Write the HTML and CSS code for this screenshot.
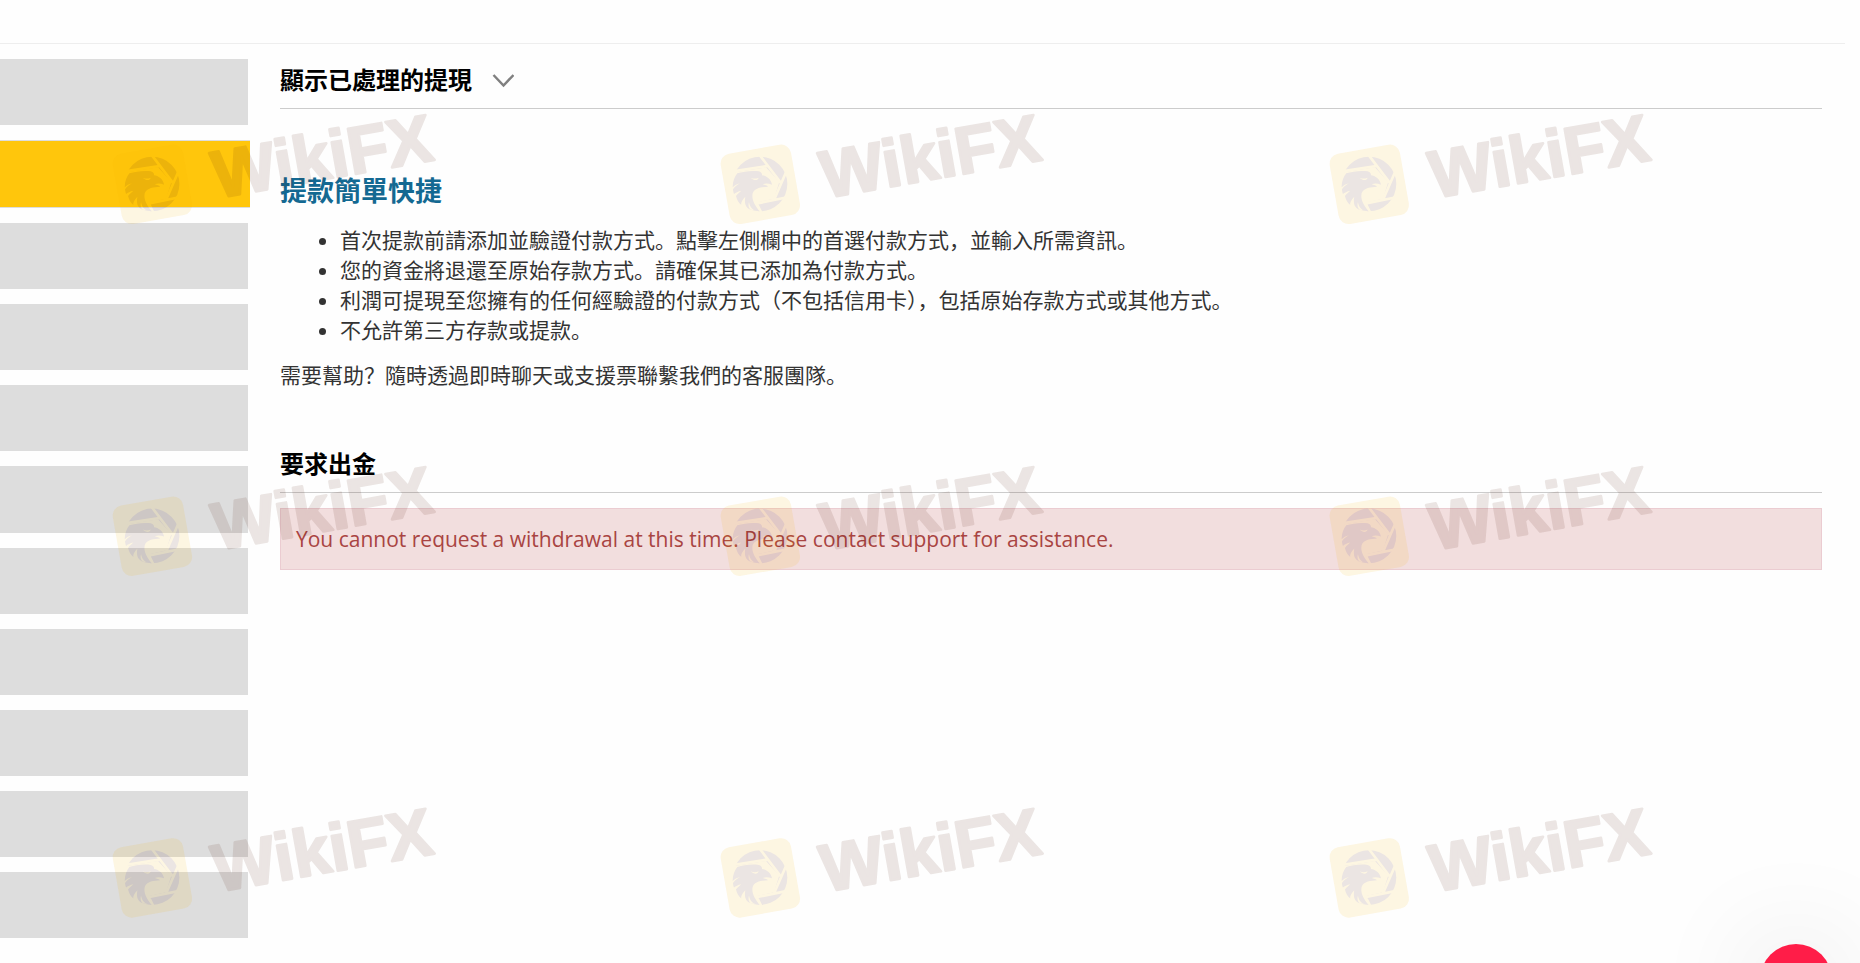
FILE: index.html
```html
<!DOCTYPE html>
<html lang="zh-Hans">
<head>
    <meta charset="UTF-8">
    <meta name="viewport" content="width=device-width, initial-scale=1.0">
    <title>提現</title>
    <link rel="stylesheet" href="styles.css">
</head>
<body>
    <header class="topbar"></header>

    <div class="layout">
        <nav class="sidebar">
            <div class="method"></div>
            <div class="method active"></div>
            <div class="method"></div>
            <div class="method"></div>
            <div class="method"></div>
            <div class="method"></div>
            <div class="method"></div>
            <div class="method"></div>
            <div class="method"></div>
            <div class="method"></div>
            <div class="method"></div>
        </nav>

        <main class="content">
            <h2 class="section-title">
                <button type="button" class="toggle">
                    顯示已處理的提現
                    <svg class="chevron" viewBox="0 0 22 16" aria-hidden="true"><path d="M1.5 3 L11.5 13.5 L21.5 3"/></svg>
                </button>
            </h2>

            <section class="info">
                <h1>提款簡單快捷</h1>
                <ul>
                    <li>首次提款前請添加並驗證付款方式。點擊左側欄中的首選付款方式，並輸入所需資訊。</li>
                    <li>您的資金將退還至原始存款方式。請確保其已添加為付款方式。</li>
                    <li>利潤可提現至您擁有的任何經驗證的付款方式（不包括信用卡），包括原始存款方式或其他方式。</li>
                    <li>不允許第三方存款或提款。</li>
                </ul>
                <p>需要幫助？隨時透過即時聊天或支援票聯繫我們的客服團隊。</p>
            </section>

            <h2 class="section-title">要求出金</h2>
            <div class="alert">You cannot request a withdrawal at this time. Please contact support for assistance.</div>
        </main>
    </div>

    <button type="button" class="chat" aria-label="即時聊天"></button>

    <!-- 浮水印 -->
    <svg class="watermark" width="1860" height="963" aria-hidden="true">
        <defs>
            <g id="mark">
                <g transform="rotate(-10 181 283)">
                    <rect class="gold" x="74" y="176" width="214" height="214" rx="30"/>
                </g>
                <circle class="dark" cx="180" cy="282" r="82"/>
                <!-- 光圈縫隙 -->
                <path class="gap" d="M94 245 L202 228 M178 194 L242 278 M262 238 L222 330 M266 321 L168 341 M168 336 L186 372"/>
                <path class="gold" d="M104 247 L198 232 L238 276 L222 326 L168 338 L180 364 L100 350 L92 262 Z"/>
                <path class="dark" d="M98 292 C98 274 104 260 112 250 C130 246 150 241 176 244 C184 246 187 252 186 256 C198 257 214 268 216 284 C206 280 196 280 188 283 C194 285 202 286 204 290 C186 291 164 293 158 310 C154 328 164 346 179 364 C158 363 150 352 147 336 C144 346 146 354 152 359 C138 354 132 342 136 320 C126 330 122 340 124 345 C116 339 111 330 108 318 C114 310 120 306 124 302 C114 304 107 308 102 312 C100 306 99 300 99 298 C106 288 114 284 120 280 C110 282 104 286 98 292 Z"/>
                <path class="gold" d="M152 263 C162 267 168 266 176 263 C174 272 162 273 152 263 Z"/>
                <text class="dark" x="375" y="325" transform="rotate(-10 375 325)">WikiFX</text>
            </g>
            <g id="row">
                <use href="#mark" x="-1824"/>
                <use href="#mark"/>
                <use href="#mark" x="1827"/>
            </g>
        </defs>
        <g transform="translate(700 90) scale(0.3333)">
            <use href="#row"/>
            <use href="#row" y="1056"/>
            <use href="#row" y="2081"/>
        </g>
    </svg>
</body>
</html>
```
FILE: styles.css
```css
* {
    box-sizing: border-box;
    margin: 0;
    padding: 0;
}
body {
    font-family: 'Open Sans', 'Noto Sans CJK SC', sans-serif;
    font-size: 21px;
    line-height: 30px;
    color: #333;
    background: #fefefe;
    overflow: hidden;
}
.topbar {
    height: 44px;
    margin-right: 15px;
    border-bottom: 1px solid #eee;
}
.layout {
    display: flex;
    gap: 30px;
    padding: 15px 38px 0 0;
}
.sidebar {
    display: flex;
    flex-direction: column;
    gap: 15px;
    width: 250px;
    height: calc(100vh - 84px);
}
.method {
    flex: 1;
    margin-right: 2px;
    background: #ddd;
}
.method.active {
    margin-right: 0;
    background: #ffc60c;
    border-top: 1px solid #ddd;
    border-bottom: 1px solid #ddd;
}
.content {
    flex: 1;
}
.section-title {
    padding: 6px 0 13px;
    font-size: 24px;
    line-height: 30px;
    font-weight: bold;
    color: #000;
    border-bottom: 1px solid #ccc;
}
.toggle {
    display: flex;
    align-items: center;
    gap: 20px;
    font: inherit;
    color: inherit;
    background: none;
    border: none;
    cursor: pointer;
}
.chevron {
    width: 22px;
    height: 16px;
    fill: none;
    stroke: #808080;
    stroke-width: 2.5;
}
.info {
    padding: 60px 0 53px;
}
.info h1 {
    margin-bottom: 12px;
    font-size: 27px;
    line-height: 44px;
    color: #146992;
}
.info ul {
    margin-bottom: 15px;
    padding-left: 60px;
}
.alert {
    margin-top: 15px;
    padding: 15px;
    color: #a94442;
    background: #f2dede;
    border: 1px solid #ebccd1;
}
.chat {
    position: fixed;
    right: 28px;
    bottom: -53px;
    width: 72px;
    height: 72px;
    background: #ff1d48;
    border: none;
    border-radius: 50%;
    box-shadow: 0 5px 110px 10px rgba(0, 0, 0, 0.1);
    cursor: pointer;
}
.watermark {
    position: fixed;
    top: 0;
    left: 0;
    opacity: 0.11;
    pointer-events: none;
}
.watermark text {
    font-family: 'Liberation Sans', Arial, sans-serif;
    font-size: 200px;
    font-weight: bold;
    stroke: #521b0a;
    stroke-width: 8px;
    stroke-linejoin: round;
}
.gold {
    fill: #f5b400;
}
.dark {
    fill: #521b0a;
}
.gap {
    fill: none;
    stroke: #f5b400;
    stroke-width: 8px;
}
```
